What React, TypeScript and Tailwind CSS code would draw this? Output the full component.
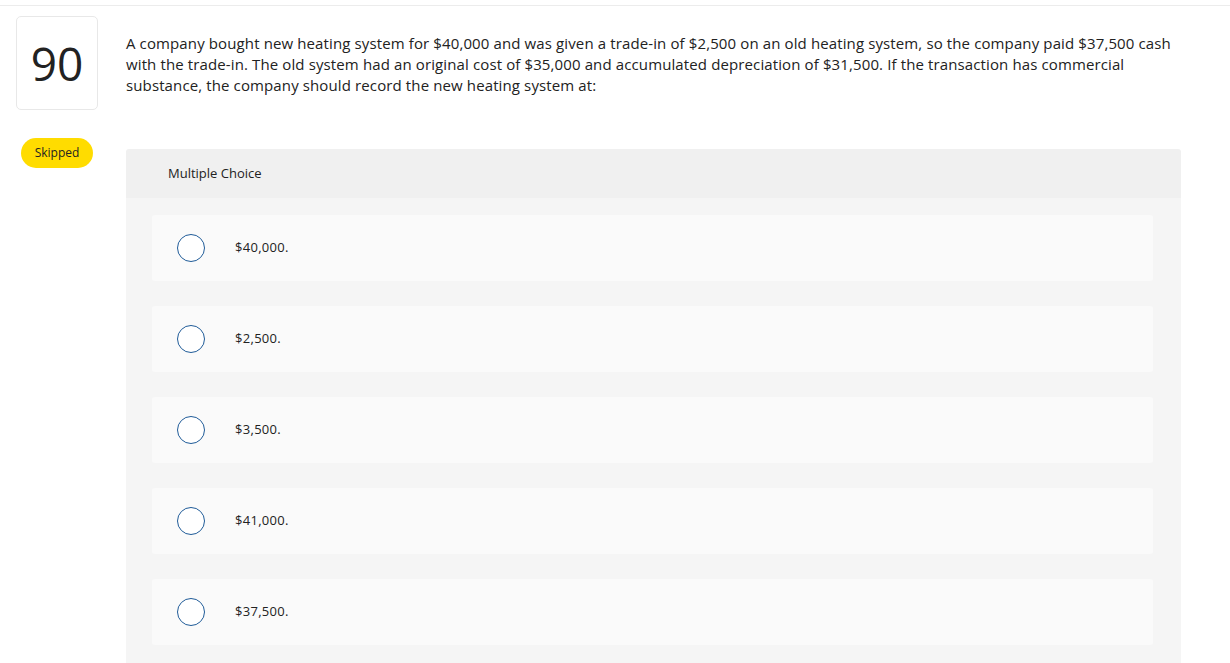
import React from "react";

const options = ["$40,000.", "$2,500.", "$3,500.", "$41,000.", "$37,500."];

export default function App() {
  return (
    <div className="w-[1230px] h-[663px] overflow-hidden bg-white text-[#1a1a1a]" style={{ fontFamily: "'Open Sans', Lato, sans-serif" }}>
      <div className="h-[6px] bg-white border-b border-[#ececec]" />
      <div className="flex">
        <div className="w-[126px] shrink-0 flex flex-col">
          <div className="ml-[16px] mt-[10px] w-[82px] h-[94px] border border-[#e8e8e8] rounded-[5px] flex items-center justify-center text-[46px] text-[#222] leading-none">
            90
          </div>
          <div className="ml-[21px] mt-[28px] w-[72px] h-[30px] rounded-full bg-[#ffdc00] flex items-center justify-center text-[12px] text-[#222]">
            Skipped
          </div>
        </div>
        <div className="flex-1 pr-[49px]">
          <p className="mt-[27px] text-[15px] leading-[21px] tracking-[0.12px] text-[#222] pr-[4px]">
            A company bought new heating system for $40,000 and was given a trade-in of $2,500 on an old heating system, so the company paid $37,500 cash with the trade-in. The old system had an original cost of $35,000 and accumulated depreciation of $31,500. If the transaction has commercial substance, the company should record the new heating system at:
          </p>
          <div className="mt-[53px] rounded-t-[3px] overflow-hidden">
            <div className="h-[49px] bg-[#f0f0f0] flex items-center pl-[42px] text-[13px] text-[#222]">
              Multiple Choice
            </div>
            <div className="bg-[#f5f5f5] pl-[26px] pr-[28px] pt-[17px] pb-[20px] flex flex-col gap-[25px]">
              {options.map((o) => (
                <div key={o} className="h-[66px] bg-[#fafafa] rounded-[3px] flex items-center pl-[25px]">
                  <div className="w-[28px] h-[28px] rounded-full border-[1.5px] border-[#1f5b98] bg-white shrink-0" />
                  <span className="ml-[30px] text-[13px] tracking-[0.3px] text-[#222]">{o}</span>
                </div>
              ))}
            </div>
          </div>
        </div>
      </div>
    </div>
  );
}
